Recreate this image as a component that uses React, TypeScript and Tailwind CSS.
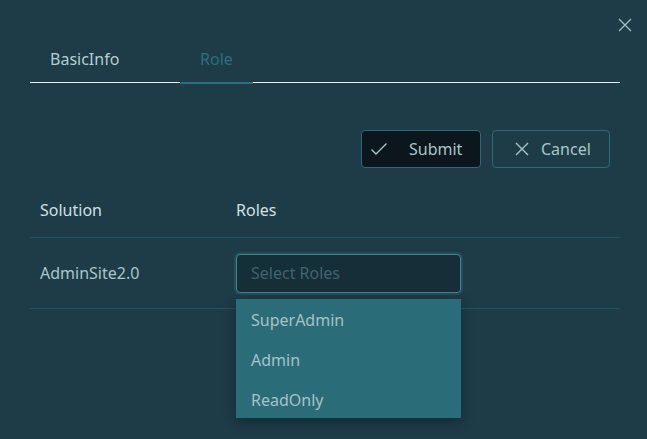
import React from "react";

export default function App() {
  return (
    <div
      className="w-[647px] h-[439px] bg-[#1d3c47] relative overflow-hidden"
      style={{ fontFamily: '"Noto Sans", "Open Sans", sans-serif' }}
    >
      {/* close */}
      <div className="absolute left-[618px] top-[18px] w-[14px] h-[14px]">
        <svg width="14" height="14" viewBox="0 0 14 14" fill="none">
          <path d="M1 1 L13 13 M13 1 L1 13" stroke="#9fbcc0" strokeWidth="1.4" />
        </svg>
      </div>

      <div className="pl-[30px] pr-[27px] pt-[38px]">
        {/* tabs */}
        <div className="flex border-b border-[#e8eef0] h-[45px]">
          <div className="w-[150px] pl-[20px] text-[16px] text-[#b3cdd1] leading-[42px]">BasicInfo</div>
          <div className="w-[73px] text-center text-[16px] text-[#2c6f7c] leading-[42px] border-b-2 border-[#2c6f7c] -mb-[1px] h-[46px]">Role</div>
        </div>

        {/* buttons */}
        <div className="flex justify-end gap-[11px] mt-[47px] pr-[10px]">
          <button className="w-[120px] h-[38px] rounded-[4px] bg-[#0b171c] border border-[#2a6b78] flex items-center pl-[8px] text-[16px] text-[#a9c6ca]">
            <svg width="18" height="14" viewBox="0 0 18 14" fill="none" className="mr-[21px]">
              <path d="M1.5 7.5 L6 12 L16.5 1.5" stroke="#a9c6ca" strokeWidth="1.4" />
            </svg>
            Submit
          </button>
          <button className="w-[118px] h-[38px] rounded-[4px] bg-transparent border border-[#2a6b78] flex items-center pl-[22px] text-[16px] text-[#a9c6ca]">
            <svg width="14" height="14" viewBox="0 0 14 14" fill="none" className="mr-[12px]">
              <path d="M1 1 L13 13 M13 1 L1 13" stroke="#a9c6ca" strokeWidth="1.4" />
            </svg>
            Cancel
          </button>
        </div>

        {/* table */}
        <div>
          <div className="flex h-[70px] items-end pb-[17px] border-b border-[#1f5563] text-[16px] leading-[20px] text-[#cfe0e3]">
            <div className="w-[206px] pl-[10px]">Solution</div>
            <div>Roles</div>
          </div>
          <div className="flex h-[71px] items-center border-b border-[#1f5563] text-[16px]">
            <div className="w-[206px] pl-[10px] text-[#a9c6ca]">AdminSite2.0</div>
            <div className="relative">
              <div className="w-[225px] h-[39px] rounded-[4px] bg-[#162e37] border border-[#3e8791] shadow-[0_0_0_2px_rgba(42,107,120,0.35)] flex items-center pl-[14px] text-[#3d6570]">
                Select Roles
              </div>
              <div className="absolute left-0 top-[45px] w-[225px] h-[119px] overflow-hidden bg-[#2b6c79] shadow-[0_4px_12px_rgba(0,0,0,0.3)] pt-[1px] z-10">
                <div className="h-[40px] flex items-center pl-[15px] text-[#a4c3c7]">SuperAdmin</div>
                <div className="h-[40px] flex items-center pl-[15px] text-[#a4c3c7]">Admin</div>
                <div className="h-[40px] flex items-center pl-[15px] text-[#a4c3c7]">ReadOnly</div>
              </div>
            </div>
          </div>
        </div>
      </div>
    </div>
  );
}
